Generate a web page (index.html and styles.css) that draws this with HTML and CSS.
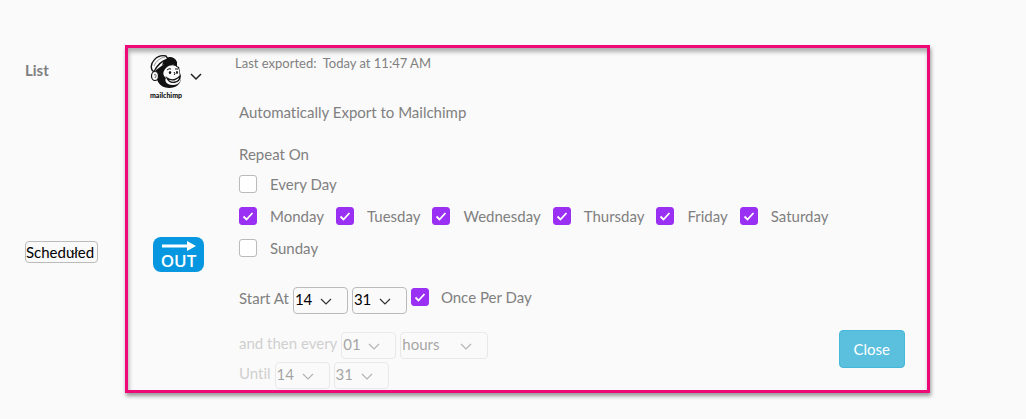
FILE: index.html
```html
<!DOCTYPE html>
<html lang="en">
<head>
    <meta charset="UTF-8">
    <meta name="viewport" content="width=device-width, initial-scale=1.0">
    <title>Export Schedule</title>
    <link rel="stylesheet" href="styles.css">
</head>
<body>
    <div class="export-page">
        <div class="list-column">
            <label class="list-title" for="mode">List</label>
            <select id="mode" class="mode-select">
                <option>Scheduled</option>
                <option>Manual</option>
            </select>
        </div>

        <form class="export-panel">
            <div class="channel-column">
                <button type="button" class="channel-button" aria-label="Mailchimp">
                    <span class="channel-logo">
                        <svg width="34" height="36" viewBox="0 0 34 36">
                            <path d="M7 16C6 25 10 34 20 34C27 34 32 30 32 24L30 13L18 8Z" fill="#111"/>
                            <path d="M17 14C21 10 27 11 29 14C31 17 30 19 31 22C34 26 29 32 23 31C18 31 15 27 17 24C13 21 14 17 17 14Z" fill="#fafafa"/>
                            <path d="M15 6C19 1 26 3 28 8L28 13C23 9 19 9 13 11Z" fill="#111"/>
                            <path d="M3 16C0 9 8 0 17 2L19 5C12 7 8 11 5 18Z" fill="#fafafa" stroke="#111" stroke-width="1.4"/>
                            <path d="M5 12C7 7 11 4 16 3" fill="none" stroke="#777" stroke-width="0.8"/>
                            <ellipse cx="6" cy="22" rx="3.500" ry="4.500" fill="#fafafa" stroke="#111" stroke-width="1.2"/>
                            <path d="M5 21C7 19 8 22 6 24" fill="none" stroke="#444" stroke-width="0.8"/>
                            <path d="M18 16Q20 14 22 15M26 15L29 15M25 18Q27 20 25 21" fill="none" stroke="#111"/>
                            <ellipse cx="21" cy="18.500" rx="1.200" ry="1.500" fill="#111"/>
                            <ellipse cx="28" cy="18.500" rx="1" ry="1.400" fill="#111"/>
                            <path d="M18 24C22 27 27 26 31 22C31 29 21 31 18 24Z" fill="#fafafa" stroke="#111" stroke-width="1.3"/>
                        </svg>
                        <span class="channel-name">mailchimp</span>
                    </span>
                    <svg class="channel-arrow" width="12" height="8" viewBox="0 0 12 8">
                        <path d="M1 1l5 5 5-5" fill="none" stroke="#222" stroke-width="1.5"/>
                    </svg>
                </button>
                <div class="direction">
                    <svg width="34" height="12" viewBox="0 0 34 12">
                        <path d="M0 4.500H25V1L34 6L25 11V7.500H0Z" fill="#fff"/>
                    </svg>
                    <span>OUT</span>
                </div>
            </div>

            <div class="settings">
                <div class="last-export">Last exported:&nbsp; Today at 11:47 AM</div>
                <div class="schedule">
                    <div class="schedule-title">Automatically Export to Mailchimp</div>
                    <div class="repeat-title">Repeat On</div>
                    <div class="days">
                        <label class="check every-day"><input type="checkbox"> Every Day</label>
                        <label class="check"><input type="checkbox" checked> Monday</label>
                        <label class="check"><input type="checkbox" checked> Tuesday</label>
                        <label class="check"><input type="checkbox" checked> Wednesday</label>
                        <label class="check"><input type="checkbox" checked> Thursday</label>
                        <label class="check"><input type="checkbox" checked> Friday</label>
                        <label class="check"><input type="checkbox" checked> Saturday</label>
                        <label class="check"><input type="checkbox"> Sunday</label>
                    </div>

                    <div class="time-row start-row">
                        <label for="startHour">Start At</label>
                        <select id="startHour"><option>14</option></select>
                        <select aria-label="Start minute"><option>31</option></select>
                        <label class="check"><input type="checkbox" checked> Once Per Day</label>
                    </div>

                    <!-- not used while "Once Per Day" is ticked -->
                    <div class="inactive">
                        <div class="time-row">
                            <label for="every">and then every</label>
                            <select id="every" disabled><option>01</option></select>
                            <select class="unit" aria-label="Interval unit" disabled><option>hours</option></select>
                        </div>
                        <div class="time-row">
                            <label for="untilHour">Until</label>
                            <select id="untilHour" disabled><option>14</option></select>
                            <select aria-label="Until minute" disabled><option>31</option></select>
                        </div>
                    </div>
                </div>
            </div>

            <button type="button" class="close-button">Close</button>
        </form>
    </div>
</body>
</html>
```

FILE: styles.css
```css
* {
    box-sizing: border-box;
}

body {
    margin: 0;
    background: #fafafa;
    color: #808080;
    font-family: Lato, sans-serif;
    font-size: 15px;
    font-variant-ligatures: none;
    line-height: 20px;
}

button,
select,
input {
    margin: 0;
    font: inherit;
}

.export-page {
    display: grid;
    grid-template-columns: 100px 1fr;
    padding: 45px 96px 24px 25px;
}

.list-column {
    display: flex;
    flex-direction: column;
    align-items: flex-start;
    gap: 161px;
    padding-top: 15px;
}

.list-title {
    font-weight: bold;
}

.export-panel {
    display: grid;
    grid-template-columns: 107px 1fr auto;
    border: 3px solid #ee0979;
    box-shadow: 1px 3px 4px rgba(0, 0, 0, 0.4), inset 1px 4px 4px rgba(0, 0, 0, 0.3);
}

.channel-column {
    display: flex;
    flex-direction: column;
    align-items: flex-start;
    gap: 137px;
    padding: 6px 0 0 20px;
}

.channel-button {
    display: flex;
    align-items: center;
    gap: 6px;
    padding: 0;
    border: none;
    background: none;
    color: #111;
    cursor: pointer;
}

.channel-logo {
    display: flex;
    flex-direction: column;
    align-items: center;
    width: 36px;
}

.channel-name {
    font-size: 7px;
    font-weight: 900;
    line-height: 10px;
}

.direction {
    display: flex;
    flex-direction: column;
    align-items: center;
    width: 51px;
    height: 35px;
    margin-left: 5px;
    padding-top: 3px;
    border-radius: 8px;
    background: #0697e0;
    color: #fff;
    font-family: "Open Sans", sans-serif;
    font-size: 17px;
    font-weight: 600;
    line-height: 18px;
}

.last-export {
    padding-top: 5px;
    font-size: 13px;
}

.schedule {
    padding: 29px 0 1px 4px;
}

.repeat-title {
    margin-top: 22px;
}

.days {
    display: flex;
    flex-wrap: wrap;
    gap: 12px;
    padding-top: 10px;
}

.every-day {
    flex-basis: 100%;
}

.check {
    display: flex;
    align-items: center;
    gap: 12px;
}

.check input {
    appearance: none;
    width: 18px;
    height: 18px;
    border: 1px solid #bbb;
    border-radius: 3px;
    background: #fff;
}

.check input:checked {
    border-color: #9b30f5;
    background: #9b30f5 url("data:image/svg+xml,%3Csvg xmlns='http://www.w3.org/2000/svg' viewBox='0 0 16 16'%3E%3Cpath d='M3.500 8.500l3 3 6-6.500' fill='none' stroke='white' stroke-width='1.8'/%3E%3C/svg%3E") center / 16px no-repeat;
}

.days .check {
    gap: 13px;
}

select {
    appearance: none;
    width: 55px;
    height: 27px;
    padding: 0 0 4px 1px;
    border: 1px solid #bbb;
    border-radius: 4px;
    background: #fafafa url("data:image/svg+xml,%3Csvg xmlns='http://www.w3.org/2000/svg' viewBox='0 0 12 8'%3E%3Cpath d='M1 1l5 5 5-5' fill='none' stroke='%23333' stroke-width='1.2'/%3E%3C/svg%3E") right 15px top 10px / 12px 8px no-repeat;
    color: #000;
}

select:disabled {
    border-color: #ccc;
    color: #000;
    opacity: 1;
}

.mode-select {
    width: 73px;
    height: 22px;
    padding: 0;
    background-position: right 18px center;
    background-size: 10px 7px;
}

.unit {
    width: 88px;
}

.time-row {
    display: flex;
    align-items: flex-start;
    gap: 4px;
}

.start-row {
    margin-top: 29px;
}

.inactive {
    display: flex;
    flex-direction: column;
    gap: 3px;
    margin-top: 18px;
    opacity: 0.35;
}

.time-row > label:first-child {
    padding-top: 1px;
}

.close-button {
    align-self: end;
    margin: 0 22px 22px 0;
    padding: 8px 14px;
    border: 1px solid #46b8da;
    border-radius: 4px;
    background: #5bc0de;
    color: #fff;
    cursor: pointer;
}
```
